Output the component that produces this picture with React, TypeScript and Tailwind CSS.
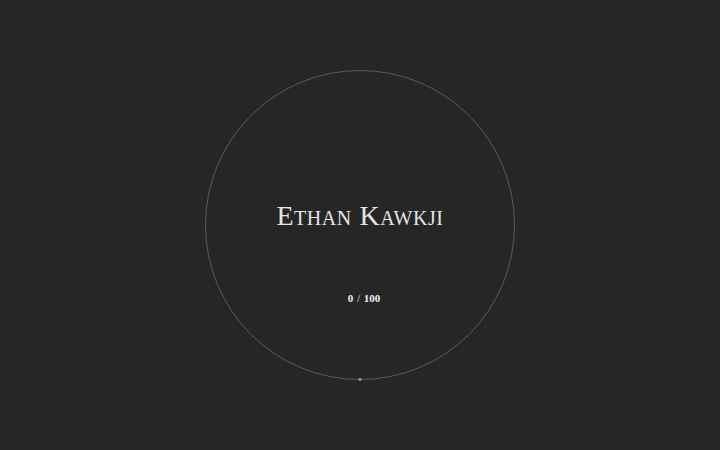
export default function App() {
  return (
    <div className="w-full h-screen bg-[#262626] flex items-center justify-center">
      <div className="relative w-[310px] h-[310px] rounded-full border border-[#5a5a5a] flex flex-col items-center pt-[129px] [font-family:'Liberation_Serif',serif]">
        <h1 className="text-[28px] leading-[32px] text-[#e4e4e4] [font-variant:small-caps] tracking-[0.02em]">
          Ethan Kawkji
        </h1>
        <p className="mt-[59px] pl-[8px] text-[11px] leading-[14px] font-bold text-[#f2f2f2]">
          0 <span className="mx-[1px] font-normal">/</span> 100
        </p>
        <span className="absolute bottom-[-2px] left-1/2 -translate-x-1/2 w-[3px] h-[3px] rounded-full bg-[#9a9a9a]" />
      </div>
    </div>
  );
}
